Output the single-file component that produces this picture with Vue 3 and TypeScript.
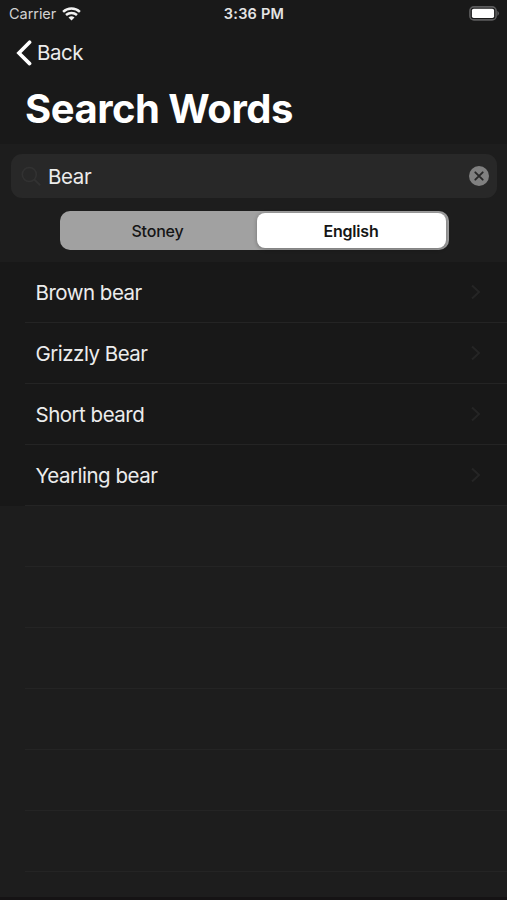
<script setup lang="ts">
import { ref } from 'vue'

type Language = 'Stoney' | 'English'

const languages: Language[] = ['Stoney', 'English']
const language = ref<Language>('English')
const query = ref('Bear')
const results = ['Brown bear', 'Grizzly Bear', 'Short beard', 'Yearling bear']
const emptyRows = 6
</script>

<template>
  <main class="screen">
    <header class="status">
      <div class="carrier">
        <span class="carrier-name">Carrier</span>
        <svg class="wifi" viewBox="0 0 19 14" aria-hidden="true">
          <path d="M1.1 4.8C5.9.4 13.1.4 17.9 4.8M4 8C7.2 5.2 11.8 5.2 15 8" fill="none" stroke="#f2f2f2" stroke-width="2.5" />
          <path d="M6.5 10.5Q9.5 8 12.5 10.5L9.5 13.5Z" fill="#f2f2f2" />
        </svg>
      </div>
      <time class="clock">3:36 PM</time>
      <svg class="battery" viewBox="0 0 31 15" aria-hidden="true">
        <rect x=".9" y=".9" width="26.2" height="13" rx="4" fill="none" stroke="#5c5c5d" stroke-width="1.6" />
        <rect x="2.9" y="2.7" width="22.2" height="9.4" rx="1.8" fill="#fff" />
        <path d="M28.4 4.8q3.2 2.6 0 5.2z" fill="#5c5c5d" />
      </svg>
    </header>

    <nav class="nav">
      <button class="back" type="button">
        <svg class="back-icon" viewBox="0 0 16 26" aria-hidden="true">
          <path d="M13.6 2.2L2.9 13L13.6 23.6" fill="none" stroke="#fff" stroke-width="3.6" stroke-linecap="round" stroke-linejoin="miter" />
        </svg>
        <span class="back-text">Back</span>
      </button>
    </nav>
    <h1 class="title"><span>Search Words</span></h1>

    <section class="search-area">
      <label class="search">
        <svg class="magnifier" viewBox="0 0 21 21" aria-hidden="true">
          <circle cx="8.3" cy="8.5" r="7" fill="none" stroke="#323232" stroke-width="1.6" />
          <path d="M13.4 13.6L18.6 18.8" stroke="#323232" stroke-width="2" stroke-linecap="round" />
        </svg>
        <span class="query">{{ query }}</span>
        <svg class="clear" viewBox="0 0 20 20" @click="query = ''">
          <circle cx="10" cy="10" r="10" fill="#808080" />
          <path d="M6.3 6.3L13.7 13.7M13.7 6.3L6.3 13.7" stroke="#272727" stroke-width="1.9" stroke-linecap="round" />
        </svg>
      </label>
      <div class="segments">
        <button
          v-for="item in languages"
          :key="item"
          type="button"
          class="segment"
          :class="{ active: item === language }"
          @click="language = item"
        ><span>{{ item }}</span></button>
      </div>
    </section>

    <ul class="list">
      <li v-for="word in results" :key="word" class="row">
        <div class="cell">
          <span class="word">{{ word }}</span>
          <svg class="chevron" viewBox="0 0 10 16" aria-hidden="true">
            <path d="M1 1.5L8 8L1 14.5" fill="none" stroke="#252525" stroke-width="2" />
          </svg>
        </div>
      </li>
      <li v-for="n in emptyRows" :key="'empty' + n" class="row empty"><div class="cell"></div></li>
    </ul>
    <footer class="bottom"></footer>
  </main>
</template>

<style>
body {
  background: #1d1d1d;
}
</style>

<style scoped>
* {
  box-sizing: border-box;
}
.screen {
  width: 507px;
  height: 900px;
  overflow: hidden;
  display: flex;
  flex-direction: column;
  background: #1d1d1d;
  color: #ececec;
  font-family: Inter, "Liberation Sans", sans-serif;
}
button {
  border: 0;
  padding: 0;
  margin: 0;
  background: none;
  color: inherit;
  font: inherit;
}
svg {
  display: block;
  flex: none;
}
.status {
  height: 27px;
  flex: none;
  display: grid;
  grid-template-columns: 1fr auto 1fr;
  align-items: center;
  padding: 0 7px 0 9px;
  background: #191919;
}
.carrier {
  display: flex;
  align-items: center;
  gap: 5px;
}
.carrier-name {
  width: 48px;
  white-space: nowrap;
  font-size: 14.5px;
  letter-spacing: -0.05px;
  color: #d2d2d2;
}
.wifi {
  width: 19px;
  height: 14px;
}
.clock {
  margin-right: 1px;
  font-size: 14.5px;
  font-weight: 600;
  letter-spacing: 0.22px;
  color: #e4e4e4;
}
.battery {
  width: 31px;
  height: 15px;
  justify-self: end;
}
.nav {
  height: 51px;
  flex: none;
  padding-left: 16px;
  background: #191919;
}
.back {
  height: 51px;
  display: flex;
  align-items: center;
  gap: 5px;
}
.back-icon {
  width: 16px;
  height: 26px;
}
.back-text {
  font-size: 20.5px;
  letter-spacing: -0.45px;
}
.title {
  height: 66px;
  flex: none;
  margin: 0;
  padding: 6px 0 0 25px;
  background: #191919;
  color: #fff;
  font-size: 40px;
  line-height: 50px;
  font-weight: 700;
  letter-spacing: -0.5px;
}
.search-area {
  height: 118px;
  flex: none;
  padding: 10px 10px 0 11px;
  background: #1d1d1d;
}
.search {
  height: 44px;
  display: flex;
  align-items: center;
  padding: 0 8px 0 10px;
  border-radius: 11px;
  background: #282828;
}
.magnifier {
  width: 21px;
  height: 21px;
}
.query {
  flex: 1;
  padding-left: 6px;
  font-size: 20.5px;
  letter-spacing: -0.4px;
}
.clear {
  width: 20px;
  height: 20px;
}
.segments {
  width: 389px;
  height: 39px;
  margin: 13px 0 0 48.5px;
  padding: 2px;
  display: grid;
  grid-template-columns: 1fr 190px;
  border-radius: 10px;
  background: #a1a1a1;
}
.segment {
  border-radius: 8px;
  color: #151515;
  font-size: 16px;
  font-weight: 500;
  letter-spacing: -0.2px;
  padding-right: 3px;
}
.segment.active {
  padding-right: 0;
  margin-right: 1px;
  background: #fff;
  font-weight: 600;
  box-shadow: 0 1px 4px rgba(0, 0, 0, 0.3);
}
.list {
  margin: 0;
  padding: 0;
  flex: none;
  list-style: none;
}
.row {
  height: 61px;
  padding-left: 25px;
  background: #181818;
}
.row.empty {
  background: #1d1d1d;
}
.cell {
  height: 100%;
  padding: 0 26px 0 10.5px;
  display: flex;
  align-items: center;
  justify-content: space-between;
  border-bottom: 1px solid #242424;
}
.word {
  padding-top: 1px;
  font-size: 20.5px;
  letter-spacing: -0.5px;
}
.chevron {
  width: 10px;
  height: 16px;
}
.bottom {
  height: 3px;
  flex: none;
  margin-top: auto;
  background: #151314;
}
</style>
